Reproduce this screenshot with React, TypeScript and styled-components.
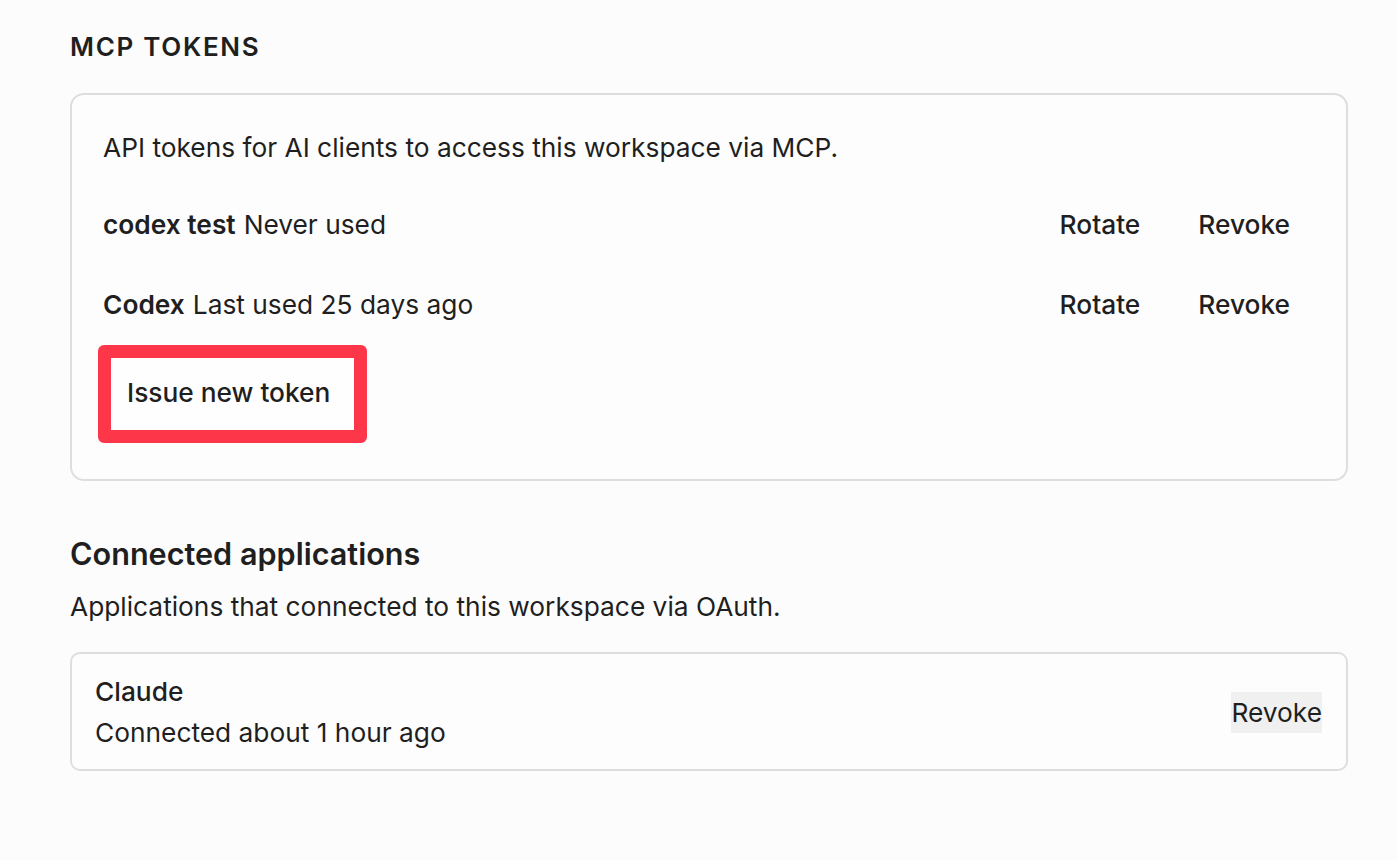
import React from "react";
import styled, { createGlobalStyle } from "styled-components";

const GlobalStyle = createGlobalStyle`
  html, body {
    margin: 0;
    background: #fcfcfc;
    font-family: Inter, "Noto Sans", "Liberation Sans", sans-serif;
    color: #1f1f1f;
  }
`;

const Page = styled.div`
  padding: 27px 50px 40px 70px;
  font-size: 26.3px;
  line-height: 39px;
`;

const SectionLabel = styled.h2`
  margin: 0 0 27px;
  font-size: 26px;
  line-height: 39px;
  font-weight: 600;
  letter-spacing: 0.065em;
  text-transform: uppercase;
`;

const Card = styled.div`
  border: 2px solid #dedede;
  border-radius: 14px;
  background: #fdfdfd;
  padding: 33px 34px 52px 31px;
  display: flex;
  flex-direction: column;
  gap: 24px;
`;

const Description = styled.p`
  margin: 0 0 5px;
`;

const TokenRow = styled.div`
  display: flex;
  align-items: center;
  justify-content: space-between;
  height: 56px;
`;

const TokenName = styled.span`
  font-weight: 600;
  margin-right: 8px;
`;

const Actions = styled.div`
  display: flex;
  gap: 14px;
`;

const TextButton = styled.button<{ $muted?: boolean }>`
  border: none;
  background: ${(p) => (p.$muted ? "#f0f0f0" : "transparent")};
  font: inherit;
  font-weight: ${(p) => (p.$muted ? 400 : 500)};
  color: #1f1f1f;
  padding: ${(p) => (p.$muted ? "0" : "8px 22px")};
  cursor: pointer;
`;

const IssueButton = styled.button`
  position: relative;
  align-self: flex-start;
  border: none;
  background: #fefefe;
  font: inherit;
  font-weight: 500;
  color: #1f1f1f;
  padding: 17px 24px 15px 24px;
  cursor: pointer;

  &::after {
    content: "";
    position: absolute;
    top: -11px;
    left: -5px;
    right: -13px;
    bottom: -16px;
    border: 13px solid #fd3749;
    border-radius: 6px;
    pointer-events: none;
  }
`;

const Heading = styled.h3`
  margin: 53px 0 14px;
  font-size: 30.6px;
  line-height: 39px;
  font-weight: 600;
`;

const SubText = styled.p`
  margin: 0 0 26px;
`;

const AppCard = styled.div`
  border: 2px solid #dedede;
  border-radius: 10px;
  background: #fdfdfd;
  padding: 17px 24px 16px 23px;
  line-height: 41px;
  display: flex;
  align-items: center;
  justify-content: space-between;
`;

const AppName = styled.div`
  font-weight: 500;
`;

const tokens = [
  { name: "codex test", status: "Never used" },
  { name: "Codex", status: "Last used 25 days ago" },
];

export default function App() {
  return (
    <>
      <GlobalStyle />
      <Page>
        <SectionLabel>MCP Tokens</SectionLabel>
        <Card>
          <Description>API tokens for AI clients to access this workspace via MCP.</Description>
          {tokens.map((t) => (
            <TokenRow key={t.name}>
              <div>
                <TokenName>{t.name}</TokenName>
                {t.status}
              </div>
              <Actions>
                <TextButton>Rotate</TextButton>
                <TextButton>Revoke</TextButton>
              </Actions>
            </TokenRow>
          ))}
          <IssueButton>Issue new token</IssueButton>
        </Card>

        <Heading>Connected applications</Heading>
        <SubText>Applications that connected to this workspace via OAuth.</SubText>
        <AppCard>
          <div>
            <AppName>Claude</AppName>
            <div>Connected about 1 hour ago</div>
          </div>
          <TextButton $muted>Revoke</TextButton>
        </AppCard>
      </Page>
    </>
  );
}
